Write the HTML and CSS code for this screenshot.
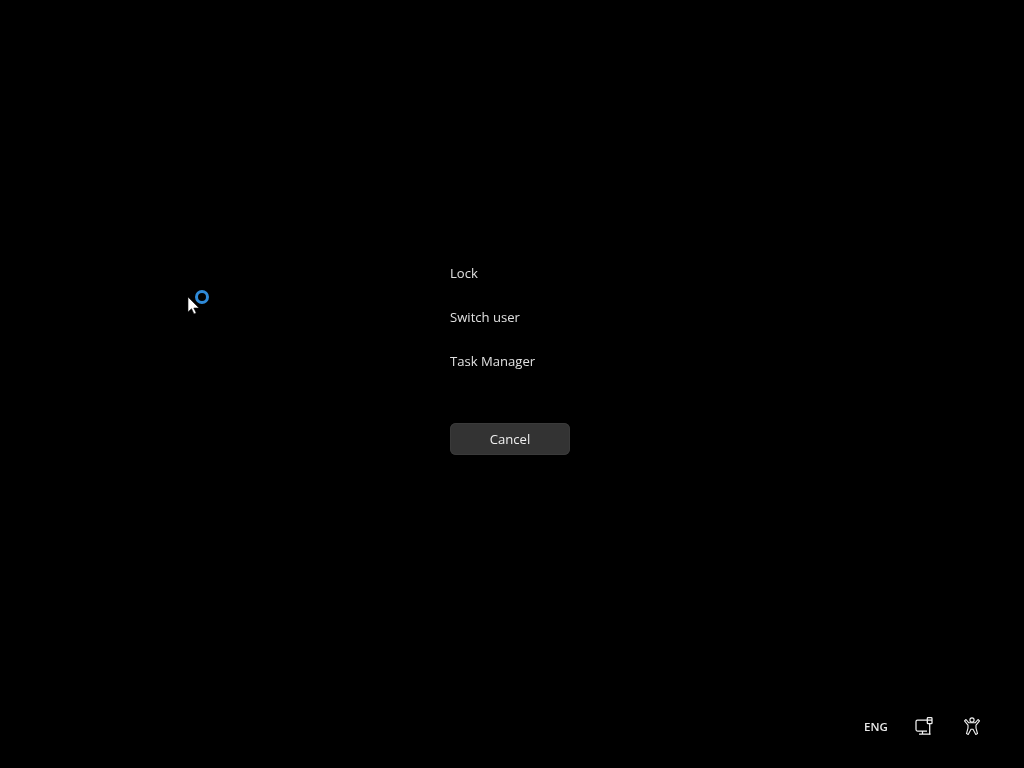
FILE: index.html
```html
<!DOCTYPE html>
<html lang="en">
<head>
<meta charset="utf-8">
<title>Security options</title>
<link rel="stylesheet" href="styles.css">
</head>
<body>
<main class="screen">
  <section class="options">
    <nav class="menu">
      <a class="menu-item">Lock</a>
      <a class="menu-item">Switch user</a>
      <a class="menu-item">Task Manager</a>
    </nav>
    <button class="cancel">Cancel</button>
  </section>
  <footer class="tray">
    <div class="tray-cell"><span class="lang">ENG</span></div>
    <div class="tray-cell">
      <svg class="icon" width="20" height="20" viewBox="0 0 20 20" fill="none" stroke="#f2f2f2" stroke-width="1.250">
        <path d="M13 4H3.500A1.500 1.500 0 0 0 2 5.500v8A1.500 1.500 0 0 0 3.500 15H13"/>
        <path d="M8.500 15v3.200M5 18.200h11.500"/>
        <rect x="13.300" y="1.700" width="4.700" height="6" rx=".8"/>
        <path d="M13.300 4h4.700M15.700 7.700v10.800"/>
      </svg>
    </div>
    <div class="tray-cell">
      <svg class="icon" width="20" height="20" viewBox="0 0 20 20" fill="none" stroke="#f2f2f2" stroke-width="1.100" stroke-linejoin="round">
        <circle cx="10" cy="4" r="2.100"/>
        <path d="M4 3.500 6.800 6.800h6.400L16 3.500l1.500 1.300-3.500 4.300v3l1.500 5.500-1.700.8-2.800-5.200H9l-2.800 5.200-1.700-.8 1.500-5.500v-3L2.500 4.800z"/>
      </svg>
    </div>
  </footer>
  <div class="pointer">
    <svg width="14" height="20" viewBox="0 0 14 20"><path d="M1 1v15l3.500-3.300L7 18l2.200-1-2.400-5H12z" fill="#fff" stroke="#111" stroke-width=".6"/></svg>
    <span class="spinner"></span>
  </div>
</main>
</body>
</html>
```
FILE: styles.css
```css
html, body {
  margin: 0;
  height: 100%;
  background: #000;
}
.screen {
  position: relative;
  width: 1024px;
  height: 768px;
  overflow: hidden;
  font-family: "Open Sans", "Noto Sans", sans-serif;
  color: #e6e6e6;
  display: flex;
  flex-direction: column;
  justify-content: space-between;
}
.options {
  padding: 251px 0 0 450px;
  display: flex;
  flex-direction: column;
  align-items: flex-start;
  will-change: opacity;
}
.menu {
  display: flex;
  flex-direction: column;
}
.menu-item {
  height: 44px;
  line-height: 44px;
  font-size: 13.1px;
  color: #e0e0e0;
}
.cancel {
  margin-top: 40px;
  width: 120px;
  height: 32px;
  padding: 0;
  border: 0;
  border-radius: 6px;
  background: #333;
  box-shadow: inset 0 0 0 1px #3a3a3a;
  color: #f0f0f0;
  font: 13.1px "Open Sans", "Noto Sans", sans-serif;
}
.tray {
  display: flex;
  justify-content: flex-end;
  padding: 0 28px 18px 0;
  will-change: opacity;
}
.tray-cell {
  width: 48px;
  height: 48px;
  display: flex;
  align-items: center;
  justify-content: center;
}
.lang {
  font-size: 11.5px;
  font-weight: 600;
  color: #e8e8e8;
}
.icon {
  display: block;
}
.pointer {
  position: absolute;
  left: 187px;
  top: 296px;
}
.pointer svg {
  display: block;
}
.spinner {
  position: absolute;
  left: 8px;
  top: -6.500px;
  width: 8px;
  height: 8px;
  border: 3px solid #2f8ad8;
  border-radius: 50%;
}
```
